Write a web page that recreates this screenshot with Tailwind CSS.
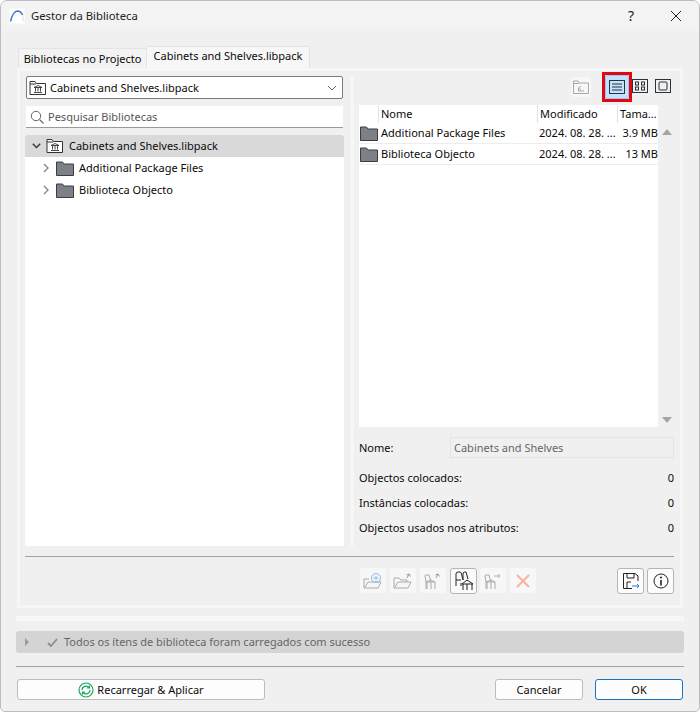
<!DOCTYPE html>
<html lang="pt">
<head>
<meta charset="UTF-8">
<title>Gestor da Biblioteca</title>
<script src="https://cdn.jsdelivr.net/npm/@tailwindcss/browser@4"></script>
</head>
<body class="bg-white">
<div class="w-[700px] h-[712px] flex flex-col bg-[#f0f0f0] border border-[#bdbdbd] rounded-t-[7px] rounded-b-[5px] overflow-hidden font-['Noto_Sans',sans-serif] text-[11px] leading-[16px] text-[#0a0a0a]">

  <!-- Title bar -->
  <div class="h-[30px] shrink-0 flex items-center bg-[#f3f3f3] pl-[8px]">
    <svg width="16" height="16" viewBox="0 0 16 16" class="mr-[6px]"><rect x="0.5" y="0.5" width="15" height="15" fill="#fff"/><path d="M1.5 13.5 C3 7 5.5 3.2 8.5 3 C11 3 12.5 4.5 13.5 7" fill="none" stroke="#4a78d0" stroke-width="1.5"/><path d="M14 7 V13.5" stroke="#ddd" stroke-width="1"/></svg>
    <span class="text-[11.3px] text-[#222]">Gestor da Biblioteca</span>
    <span class="ml-auto text-[14px] text-[#222] w-[14px] text-center">?</span>
    <svg width="10" height="10" viewBox="0 0 10 10" class="ml-[33px] mr-[18px]"><path d="M0 0 L10 10 M10 0 L0 10" stroke="#222" stroke-width="1"/></svg>
  </div>

  <!-- Tabs -->
  <div class="h-[37px] shrink-0 flex items-end pl-[17px]">
    <div class="h-[20px] w-[128px] flex items-center justify-center bg-[#f3f3f3] border-t border-l border-[#e4e4e4]">Bibliotecas no Projecto</div>
    <div class="h-[22px] w-[164px] pb-[3px] flex items-center justify-center bg-[#f7f7f7] border-t border-x border-[#e4e4e4]">Cabinets and Shelves.libpack</div>
  </div>

  <!-- Tab panel -->
  <div class="mx-[16px] h-[540px] shrink-0 flex flex-col border-[3px] border-[#f7f7f7] pl-[5px] pr-[6px] pt-[5px]">
    <div class="h-[470px] flex">
      <!-- Left column -->
      <div class="w-[319px] flex flex-col">
        <div class="h-[23px] mx-px flex items-center bg-white border border-[#7a7a7a] rounded-[2px] pl-[2px] pr-[5px]">
          <svg width="18" height="16" viewBox="0 0 18 16" class="mr-[3px]"><path d="M1 14.5 V1.5 H6 L7.5 3.5 H16.5 V14.5 Z M1 4 H7" fill="none" stroke="#333"/><path d="M5 7.5 L9 5.5 L13 7.5 Z M5 12.5 H13 M6.5 8 V11.5 M9 8 V11.5 M11.5 8 V11.5" fill="none" stroke="#333" stroke-width="0.9"/></svg>
          <span>Cabinets and Shelves.libpack</span>
          <svg width="10" height="6" viewBox="0 0 10 6" class="ml-auto"><path d="M1 1 L5 5 L9 1" fill="none" stroke="#666"/></svg>
        </div>
        <div class="h-[22px] mt-[7px] mx-px flex items-center bg-white border-b border-[#999] pl-[4px]">
          <svg width="14" height="14" viewBox="0 0 14 14" class="mr-[4px]"><circle cx="6" cy="6" r="4.7" fill="none" stroke="#666"/><path d="M9.5 9.5 L13.5 13.5" stroke="#666" stroke-width="1.1"/></svg>
          <span class="text-[#555]">Pesquisar Bibliotecas</span>
        </div>
        <div class="mt-[7px] flex-1 bg-white flex flex-col">
          <div class="h-[22px] flex items-center bg-[#d9d9d9] rounded-t-[2px] pl-[7px]">
            <svg width="9" height="6" viewBox="0 0 9 6" class="mr-[5px]"><path d="M0.8 0.8 L4.5 4.6 L8.2 0.8" fill="none" stroke="#333" stroke-width="1.4"/></svg>
            <svg width="18" height="16" viewBox="0 0 18 16" class="mr-[5px]"><path d="M1 14.5 V1.5 H6 L7.5 3.5 H16.5 V14.5 Z M1 4 H7" fill="#fff" stroke="#333"/><path d="M5 7.5 L9 5.5 L13 7.5 Z M5 12.5 H13 M6.5 8 V11.5 M9 8 V11.5 M11.5 8 V11.5" fill="none" stroke="#333" stroke-width="0.9"/></svg>
            <span>Cabinets and Shelves.libpack</span>
          </div>
          <div class="h-[22px] flex items-center pl-[18px]">
            <svg width="6" height="10" viewBox="0 0 6 10" class="mr-[7px]"><path d="M1 1 L5 5 L1 9" fill="none" stroke="#888" stroke-width="1.4"/></svg>
            <svg width="18" height="15" viewBox="0 0 18 15" class="mr-[5px]"><path d="M0.5 14.5 V1 H6.5 L8 3 H17.5 V14.5 Z" fill="#7d8087" stroke="#3a3d42"/></svg>
            <span>Additional Package Files</span>
          </div>
          <div class="h-[22px] flex items-center pl-[18px]">
            <svg width="6" height="10" viewBox="0 0 6 10" class="mr-[7px]"><path d="M1 1 L5 5 L1 9" fill="none" stroke="#888" stroke-width="1.4"/></svg>
            <svg width="18" height="15" viewBox="0 0 18 15" class="mr-[5px]"><path d="M0.5 14.5 V1 H6.5 L8 3 H17.5 V14.5 Z" fill="#7d8087" stroke="#3a3d42"/></svg>
            <span>Biblioteca Objecto</span>
          </div>
        </div>
      </div>

      <!-- Splitter -->
      <div class="w-[10px] flex justify-end"><div class="w-[4px] bg-[#f6f6f6]"></div></div>

      <!-- Right column -->
      <div class="w-[320px] pl-[5px] flex flex-col">
        <div class="h-[29px] flex items-start">
          <div class="ml-[212px] w-[20px] h-[20px] mt-px flex items-center justify-center bg-[#f7f7f7] rounded-[3px]">
            <svg width="16" height="14" viewBox="0 0 16 14"><path d="M0.5 13.5 V1 H5 L6.5 3 H15.5 V13.5 Z M0.5 3.5 H6" fill="none" stroke="#a8a8a8"/><path d="M8 6 L5.5 8 L8 10 M5.5 8 V11 H11" fill="none" stroke="#a8a8a8"/></svg>
          </div>
          <!-- selected list view -->
          <div class="ml-[11px] w-[30px] h-[30px] -mt-[4px] shrink-0 flex items-center justify-center border-[3px] border-[#e30613]">
            <div class="w-[24px] h-[24px] flex items-center justify-center bg-[#c4e2fd] border border-[#90c8f5] rounded-[2px]">
              <svg width="16" height="14" viewBox="0 0 16 14"><rect x="0.5" y="0.5" width="15" height="13" fill="none" stroke="#2c3338"/><path d="M3 4 H13 M3 7 H13 M3 10 H13" stroke="#2c3338"/></svg>
            </div>
          </div>
          <svg width="16" height="14" viewBox="0 0 16 14" class="mt-[3px]"><rect x="0.5" y="0.5" width="15" height="13" fill="none" stroke="#2c3338"/><rect x="3.5" y="3" width="3" height="3" fill="none" stroke="#2c3338"/><rect x="9.5" y="3" width="3" height="3" fill="none" stroke="#2c3338"/><rect x="3.5" y="8" width="3" height="3" fill="none" stroke="#2c3338"/><rect x="9.5" y="8" width="3" height="3" fill="none" stroke="#2c3338"/></svg>
          <svg width="16" height="14" viewBox="0 0 16 14" class="mt-[3px] ml-[7px]"><rect x="0.5" y="0.5" width="15" height="13" fill="none" stroke="#2c3338"/><rect x="4" y="3" width="8" height="8" rx="1" fill="none" stroke="#2c3338"/></svg>
        </div>

        <!-- File list -->
        <div class="h-[322px] flex">
          <div class="w-[299px] bg-white flex flex-col">
            <div class="h-[18px] flex items-center">
              <div class="w-[20px] h-full border-r border-[#e3e3e3]"></div>
              <div class="w-[159px] h-full pl-[2px] flex items-center border-r border-[#e3e3e3]">Nome</div>
              <div class="w-[80px] h-full pl-[2px] flex items-center border-r border-[#e3e3e3]">Modificado</div>
              <div class="w-[40px] h-full pl-[2px] flex items-center">Tama...</div>
            </div>
            <div class="h-[21px] flex items-center border-b border-[#ededed]">
              <svg width="18" height="15" viewBox="0 0 18 15" class="ml-px mr-[3px] shrink-0"><path d="M0.5 14.5 V1 H6.5 L8 3 H17.5 V14.5 Z" fill="#7d8087" stroke="#3a3d42"/></svg>
              <span class="w-[158px]">Additional Package Files</span>
              <span class="w-[80px]">2024. 08. 28. ...</span>
              <span class="w-[39px] text-right">3.9 MB</span>
            </div>
            <div class="h-[21px] flex items-center border-b border-[#ededed]">
              <svg width="18" height="15" viewBox="0 0 18 15" class="ml-px mr-[3px] shrink-0"><path d="M0.5 14.5 V1 H6.5 L8 3 H17.5 V14.5 Z" fill="#7d8087" stroke="#3a3d42"/></svg>
              <span class="w-[158px]">Biblioteca Objecto</span>
              <span class="w-[80px]">2024. 08. 28. ...</span>
              <span class="w-[39px] text-right">13 MB</span>
            </div>
          </div>
          <div class="w-[10px] ml-[4px] flex flex-col justify-between pt-[24px] pb-[4px]">
            <svg width="10" height="6" viewBox="0 0 10 6"><path d="M0 6 L5 0 L10 6 Z" fill="#a6a6a6"/></svg>
            <svg width="10" height="6" viewBox="0 0 10 6"><path d="M0 0 L5 6 L10 0 Z" fill="#a6a6a6"/></svg>
          </div>
        </div>

        <!-- Details -->
        <div class="mt-[10px] h-[21px] flex items-center">
          <span class="w-[91px]">Nome:</span>
          <div class="w-[224px] h-[21px] flex items-center border border-[#e4e4e4] pl-[3px] text-[#666]">Cabinets and Shelves</div>
        </div>
        <div class="mt-[12px] h-[16px] w-[315px] flex justify-between"><span>Objectos colocados:</span><span>0</span></div>
        <div class="mt-[9px] h-[16px] w-[315px] flex justify-between"><span>Instâncias colocadas:</span><span>0</span></div>
        <div class="mt-[9px] h-[16px] w-[315px] flex justify-between"><span>Objectos usados nos atributos:</span><span>0</span></div>
      </div>
    </div>

    <div class="mt-[10px] h-px w-[649px] bg-[#a3a3a3]"></div>

    <!-- Action buttons -->
    <div class="mt-[11px] w-[649px] flex items-center pl-[335px] gap-[4px]">
      <div class="w-[26px] h-[25px] flex items-center justify-center bg-[#f7f7f7] rounded-[3px]">
        <svg width="20" height="18" viewBox="0 0 20 18"><path d="M1 16 V7 H6 M1 16 H15 L18 10 H5 L2 15" fill="none" stroke="#aaa"/><circle cx="13" cy="6" r="4.5" fill="none" stroke="#8fb8ec"/><path d="M13 3.5 V8.5 M10.5 6 H15.5" stroke="#8fb8ec"/></svg>
      </div>
      <div class="w-[26px] h-[25px] flex items-center justify-center bg-[#f7f7f7] rounded-[3px]">
        <svg width="20" height="18" viewBox="0 0 20 18"><path d="M1 16 V6 H6 L8 8 H14 V10 M1 16 H15 L18 10 H5 L2 15" fill="none" stroke="#aaa"/><path d="M14 6 L16 2 M16 2 L13.5 3 M16 2 L17.5 4.5" fill="none" stroke="#999"/></svg>
      </div>
      <div class="w-[26px] h-[25px] flex items-center justify-center bg-[#f7f7f7] rounded-[3px]">
        <svg width="20" height="18" viewBox="0 0 20 18"><path d="M3 17 V10 L2 4 Q2 3 3 3 H6 L8 10 M3 10 L8 8 L12 10 Z M4 10 V17 M8 10 V17 M12 10 V17" fill="none" stroke="#aaa"/><path d="M13 6 L15 2 M15 2 L12.5 3 M15 2 L16.5 4.5" fill="none" stroke="#999"/></svg>
      </div>
      <div class="w-[27px] h-[26px] -my-px -mr-px flex items-center justify-center bg-[#fafafa] border border-[#b5b5b5] rounded-[3px]">
        <svg width="20" height="20" viewBox="0 0 20 20"><path d="M2 15 V3 Q2 1 4 1 H6 Q7 1 7.5 3 L9 9 M2 9 H7 M7 12 V15" fill="none" stroke="#222"/><path d="M9 9 L9 3 Q9 1 10.5 1 H12 L14 8 M8 13 L13 9 L19 13 Z M9 13 V19 M13 13 V19 M18 13 V19" fill="none" stroke="#222"/></svg>
      </div>
      <div class="w-[26px] h-[25px] flex items-center justify-center bg-[#f7f7f7] rounded-[3px]">
        <svg width="20" height="18" viewBox="0 0 20 18"><path d="M3 17 V10 L2 4 Q2 3 3 3 H6 L8 10 M3 10 L8 8 L12 10 Z M4 10 V17 M8 10 V17 M12 10 V17" fill="none" stroke="#aaa"/><path d="M11 4 H17 M15 2 L17 4 L15 6" fill="none" stroke="#8fb8ec"/></svg>
      </div>
      <div class="w-[26px] h-[25px] flex items-center justify-center bg-[#f7f7f7] rounded-[3px]">
        <svg width="14" height="14" viewBox="0 0 14 14"><path d="M1 1 L13 13 M13 1 L1 13" stroke="#f6b3a6" stroke-width="2"/></svg>
      </div>
      <div class="ml-auto w-[27px] h-[26px] -my-px flex items-center justify-center bg-[#fcfcfc] border border-[#b5b5b5] rounded-[3px]">
        <svg width="18" height="18" viewBox="0 0 18 18"><path d="M10 16.5 H1.5 V1.5 H13 L16 4 V9" fill="none" stroke="#222"/><path d="M5 1.5 V6 H12 V1.5 M5 16.5 V10 H9" fill="none" stroke="#222"/><path d="M10 14 H17 M15 12 L17 14 L15 16" fill="none" stroke="#2a7de1"/></svg>
      </div>
      <div class="w-[27px] h-[26px] -my-px -ml-px flex items-center justify-center bg-[#fcfcfc] border border-[#b5b5b5] rounded-[3px]">
        <svg width="16" height="16" viewBox="0 0 16 16"><circle cx="8" cy="8" r="7" fill="none" stroke="#222"/><circle cx="8" cy="4.5" r="1" fill="#222"/><path d="M8 7 V12.5" stroke="#222" stroke-width="1.6"/></svg>
      </div>
    </div>
  </div>

  <!-- Progress strip -->
  <div class="mx-[15px] mt-[8px] h-[5px] shrink-0 bg-[#f7f7f7]"></div>

  <!-- Status bar -->
  <div class="mx-[15px] mt-[10px] h-[22px] shrink-0 flex items-center bg-[#d4d4d4] rounded-[3px] pl-[9px] text-[#666]">
    <svg width="4" height="8" viewBox="0 0 4 8" class="mr-[18px]"><path d="M0 0 L4 4 L0 8 Z" fill="#9a9a9a"/></svg>
    <svg width="11" height="9" viewBox="0 0 11 9" class="mr-[6px]"><path d="M1 5 L4 8 L10 1" fill="none" stroke="#8e8e8e" stroke-width="1.8"/></svg>
    <span>Todos os ítens de biblioteca foram carregados com sucesso</span>
  </div>

  <div class="mx-[15px] mt-[13px] h-px shrink-0 bg-[#a3a3a3]"></div>

  <!-- Bottom buttons -->
  <div class="mt-[12px] mx-[16px] flex items-center">
    <div class="w-[248px] h-[21px] flex items-center justify-center bg-[#fdfdfd] border border-[#bcbcbc] rounded-[3px]">
      <svg width="16" height="16" viewBox="0 0 16 16" class="mr-[3px]"><circle cx="8" cy="8" r="7" fill="none" stroke="#17a858" stroke-width="1.2"/><path d="M4 8 A4 4 0 0 1 11 5.5 M11.5 3.5 V6 H9 M12 8 A4 4 0 0 1 5 10.5 M4.5 12.5 V10 H7" fill="none" stroke="#17a858" stroke-width="1.2"/></svg>
      Recarregar &amp; Aplicar
    </div>
    <div class="ml-[230px] w-[88px] h-[21px] flex items-center justify-center bg-[#fdfdfd] border border-[#bcbcbc] rounded-[3px]">Cancelar</div>
    <div class="ml-[12px] w-[88px] h-[21px] flex items-center justify-center bg-[#fdfdfd] border border-[#1a74c4] rounded-[3px]">OK</div>
  </div>
</div>
</body>
</html>
